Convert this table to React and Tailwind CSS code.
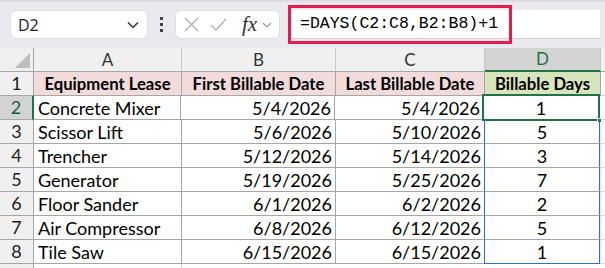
import React from 'react';

const rows = [
  ['Concrete Mixer', '5/4/2026', '5/4/2026', '1'],
  ['Scissor Lift', '5/6/2026', '5/10/2026', '5'],
  ['Trencher', '5/12/2026', '5/14/2026', '3'],
  ['Generator', '5/19/2026', '5/25/2026', '7'],
  ['Floor Sander', '6/1/2026', '6/2/2026', '2'],
  ['Air Compressor', '6/8/2026', '6/12/2026', '5'],
  ['Tile Saw', '6/15/2026', '6/15/2026', '1'],
];

const cell = "h-[24px] border-r border-b border-[#a6a6a6] flex items-center text-[18px] text-black leading-none pt-[1px]";

export default function App() {
  return (
    <div className="w-[605px] h-[268px] overflow-hidden bg-white font-['Lato',sans-serif]">
      {/* Formula bar */}
      <div className="h-[48px] bg-[#e9e9ee] border-t-2 border-[#dcdce2] flex items-start pt-[8px] pl-[10px]">
        <div className="w-[138px] h-[29px] bg-white rounded-[6px] border border-[#dedee4] flex items-center justify-between pl-[7px] pr-[8px]">
          <span className="text-[16px] text-[#222] font-['Open_Sans',sans-serif]">D2</span>
          <svg width="12" height="8" viewBox="0 0 12 8" fill="none" stroke="#333" strokeWidth="1.5">
            <path d="M1 1.5l5 5 5-5" />
          </svg>
        </div>
        <div className="w-[27px] h-[29px] flex flex-col items-center justify-center gap-[3px]">
          <span className="w-[3px] h-[3px] bg-[#444]" />
          <span className="w-[3px] h-[3px] bg-[#444]" />
          <span className="w-[3px] h-[3px] bg-[#444]" />
        </div>
        <div className="w-[105px] h-[29px] bg-white rounded-[6px] border border-[#dedee4] flex items-center pl-[8px]">
          <svg width="15" height="15" viewBox="0 0 15 15" fill="none" stroke="#b0b0b0" strokeWidth="1.3">
            <path d="M1 1l13 13M14 1L1 14" />
          </svg>
          <svg className="ml-[11px]" width="17" height="13" viewBox="0 0 17 13" fill="none" stroke="#b0b0b0" strokeWidth="1.3">
            <path d="M1 7l5 5L16 1" />
          </svg>
          <span className="ml-[15px] text-[21px] italic font-['Liberation_Serif',serif] text-[#333] leading-none">fx</span>
          <svg className="ml-[5px]" width="10" height="6" viewBox="0 0 10 6" fill="none" stroke="#999" strokeWidth="1.2">
            <path d="M1 1l4 4 4-4" />
          </svg>
        </div>
        <div className="ml-[8px] -mt-[5px] relative flex-1 h-[39px]">
          <div className="absolute left-0 right-[5px] top-[5px] h-[29px] bg-white border-b border-[#d0d0d6]" />
          <div className="absolute left-0 top-0 w-[224px] h-[39px] border-[3px] border-[#e21d4e] flex items-center pl-[9px]">
            <span className="text-[16.5px] font-['Liberation_Mono',monospace] text-black">=DAYS(C2:C8,B2:B8)+1</span>
          </div>
        </div>
      </div>

      {/* Column headers */}
      <div className="flex h-[24px] bg-[#f0f0f0]">
        <div className="w-[34px] border-r border-b border-[#a6a6a6] relative">
          <svg className="absolute right-[3px] bottom-[3px]" width="15" height="15" viewBox="0 0 15 15">
            <path d="M15 0V15H0Z" fill="#bdbdbd" />
          </svg>
        </div>
        {[['A', 148], ['B', 154], ['C', 149]].map(([l, w]) => (
          <div key={l} style={{ width: w }} className="border-r border-b border-[#c8c8c8] border-b-[#a6a6a6] flex items-center justify-center text-[17px] text-[#333]">{l}</div>
        ))}
        <div className="w-[116px] bg-[#d3d3d3] border-r border-[#c8c8c8] border-b-2 border-b-[#217346] flex items-center justify-center text-[17px] text-[#217346]">D</div>
        <div className="flex-1 border-b border-[#a6a6a6]" />
      </div>

      {/* Header row */}
      <div className="flex">
        <div className="w-[34px] h-[24px] bg-[#f0f0f0] border-r border-b border-[#a6a6a6] flex items-center justify-center text-[18px] text-[#222]">1</div>
        <div className={`${cell} w-[148px] bg-[#f2dcdb] justify-center font-bold !text-[16.7px]`}>Equipment Lease</div>
        <div className={`${cell} w-[154px] bg-[#f2dcdb] justify-center font-bold !text-[16.7px]`}>First Billable Date</div>
        <div className={`${cell} w-[149px] bg-[#f2dcdb] justify-center font-bold !text-[16.7px]`}>Last Billable Date</div>
        <div className={`${cell} w-[116px] bg-[#d8e4bc] justify-center font-bold !text-[16.7px]`}>Billable Days</div>
        <div className="flex-1 h-[24px] border-b border-[#d4d4d4]" />
      </div>

      {rows.map((r, i) => {
        const n = i + 2;
        const sel = n === 2;
        return (
          <div key={n} className="flex">
            <div className={`w-[34px] h-[24px] border-b flex items-center justify-center text-[18px] ${sel ? 'bg-[#d3d3d3] text-[#1f5c3a] border-r-2 border-r-[#217346] border-b-[#a6a6a6]' : 'bg-[#f0f0f0] text-[#222] border-r border-[#a6a6a6]'}`}>{n}</div>
            <div className={`${cell} ${sel ? 'w-[147px]' : 'w-[148px]'} pl-[4px]`}>{r[0]}</div>
            <div className={`${cell} w-[154px] justify-end pr-[3px]`}>{r[1]}</div>
            <div className={`${cell} w-[149px] justify-end pr-[3px]`}>{r[2]}</div>
            <div className={`${cell} w-[116px] justify-center relative border-l border-l-[#2f6dd0] border-r-[#2f6dd0] ${n === 8 ? 'border-b-[#2f6dd0]' : ''} -ml-px`}>
              {r[3]}
              {sel && (
                <div className="absolute -left-[2px] -top-[2px] -right-[2px] -bottom-[2px] border-2 border-[#217346]">
                  <span className="absolute -right-[4px] -bottom-[4px] w-[5px] h-[5px] bg-[#217346] border border-white" />
                </div>
              )}
            </div>
            <div className="flex-1 h-[24px] border-b border-[#d4d4d4] shadow-[inset_3px_0_3px_-2px_rgba(0,0,0,0.12)]" />
          </div>
        );
      })}

      <div className="flex">
        <div className="w-[34px] h-[24px] bg-[#f0f0f0] border-r border-[#a6a6a6]" />
        <div className="w-[148px] h-[24px] border-r border-[#d4d4d4]" />
      </div>
    </div>
  );
}
